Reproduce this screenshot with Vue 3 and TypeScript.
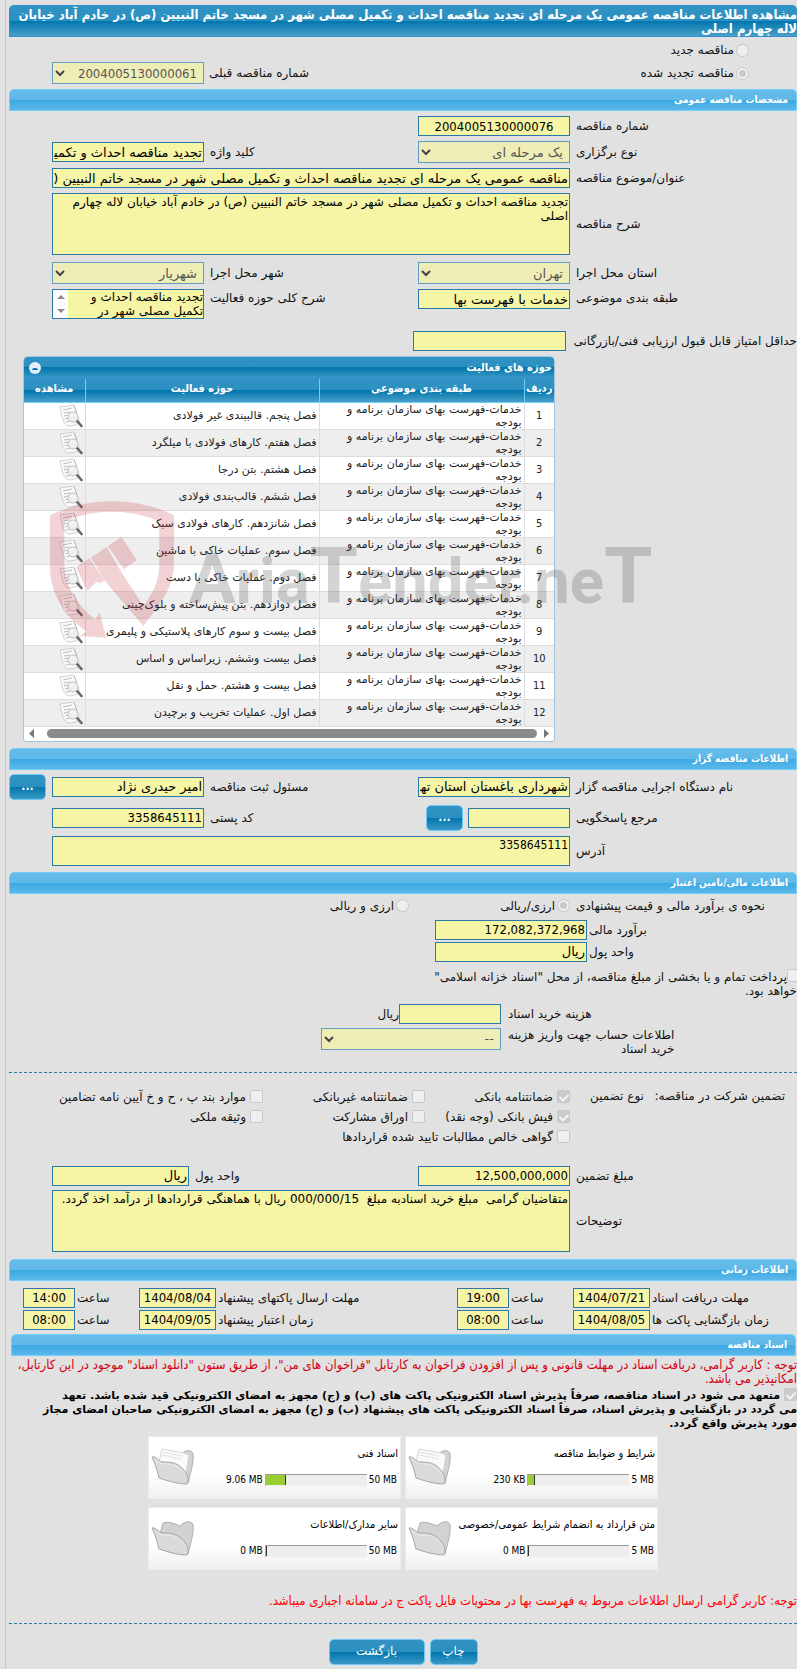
<script setup lang="ts">
interface Activity { id: number; title: string }
interface DocCard { title: string; max: string; used: string; percent: number; filled: boolean }
interface Guarantee { label: string; checked: boolean; wide?: boolean }

const subject = 'خدمات-فهرست بهای سازمان برنامه و بودجه'
const activities: Activity[] = [
  'فصل پنجم. قالببندی غیر فولادی',
  'فصل هفتم. کارهای فولادی با میلگرد',
  'فصل هشتم. بتن درجا',
  'فصل ششم. قالب‌بندی فولادی',
  'فصل شانزدهم. کارهای فولادی سبک',
  'فصل سوم. عملیات خاکی با ماشین',
  'فصل دوم. عملیات خاکی با دست',
  'فصل دوازدهم. بتن پیش‌ساخته و بلوک‌چینی',
  'فصل بیست و سوم کارهای پلاستیکی و پلیمری',
  'فصل بیست وششم. زیراساس و اساس',
  'فصل بیست و هشتم. حمل و نقل',
  'فصل اول. عملیات تخریب و برچیدن',
].map((title, i) => ({ id: i + 1, title }))

const guarantees: Guarantee[] = [
  { label: 'ضمانتنامه بانکی', checked: true },
  { label: 'ضمانتنامه غیربانکی', checked: false },
  { label: 'موارد بند پ ، ح و خ آیین نامه تضامین', checked: false },
  { label: 'فیش بانکی (وجه نقد)', checked: true },
  { label: 'اوراق مشارکت', checked: false },
  { label: 'وثیقه ملکی', checked: false },
  { label: 'گواهی خالص مطالبات تایید شده قراردادها', checked: false, wide: true },
]

const docs: DocCard[] = [
  { title: 'شرایط و ضوابط مناقصه', max: '5 MB', used: '230 KB', percent: 5, filled: true },
  { title: 'اسناد فنی', max: '50 MB', used: '9.06 MB', percent: 19, filled: true },
  { title: 'متن قرارداد به انضمام شرایط عمومی/خصوصی', max: '5 MB', used: '0 MB', percent: 0, filled: false },
  { title: 'سایر مدارک/اطلاعات', max: '50 MB', used: '0 MB', percent: 0, filled: false },
]

const times = [
  [
    { label: 'مهلت دریافت اسناد', date: '1404/07/21', time: '19:00' },
    { label: 'مهلت ارسال پاکتهای پیشنهاد', date: '1404/08/04', time: '14:00' },
  ],
  [
    { label: 'زمان بازگشایی پاکت ها', date: '1404/08/05', time: '08:00' },
    { label: 'زمان اعتبار پیشنهاد', date: '1404/09/05', time: '08:00' },
  ],
]
const description = 'تجدید مناقصه احداث و تکمیل مصلی شهر در مسجد خاتم النبیین (ص) در خادم آباد خیابان لاله چهارم اصلی'
const notes = 'متقاضیان گرامی  مبلغ خرید اسنادبه مبلغ  000/000/15 ریال با هماهنگی قراردادها از درآمد اخذ گردد.'
</script>

<template>
  <main class="page" dir="rtl">
    <h1 class="title-bar">مشاهده اطلاعات مناقصه عمومی یک مرحله ای تجدید مناقصه احداث و تکمیل مصلی شهر در مسجد خاتم النبیین (ص) در خادم آباد خیابان<br>لاله چهارم اصلی</h1>

    <div class="kind-row">
      <label class="option"><input type="radio" name="kind" disabled>مناقصه جدید</label>
    </div>
    <div class="kind-row previous">
      <label class="option kind"><input type="radio" name="kind" checked disabled>مناقصه تجدید شده</label>
      <label class="end" for="prev">شماره مناقصه قبلی</label>
      <span class="select-box"><select id="prev" class="digits" disabled><option>2004005130000061</option></select><svg viewBox="0 0 10 7"><path d="M1 1l4 4 4-4" /></svg></span>
    </div>

    <h2 class="bar">مشخصات مناقصه عمومی</h2>
    <section class="form">
      <div class="row">
        <label for="no">شماره مناقصه</label>
        <input id="no" class="digits center" value="2004005130000076" readonly>
      </div>
      <div class="row">
        <label for="type">نوع برگزاری</label>
        <span class="select-box"><select id="type" disabled><option>یک مرحله ای</option></select><svg viewBox="0 0 10 7"><path d="M1 1l4 4 4-4" /></svg></span>
        <label for="keyword">کلید واژه</label>
        <input id="keyword" value="تجدید مناقصه احداث و تکمیل مصلی شهر" readonly>
      </div>
      <div class="row">
        <label for="subject">عنوان/موضوع مناقصه</label>
        <input id="subject" class="wide" value="مناقصه عمومی یک مرحله ای تجدید مناقصه احداث و تکمیل مصلی شهر در مسجد خاتم النبیین (ص) در خادم آباد خیابان لاله چهارم اصلی" readonly>
      </div>
      <div class="row">
        <label for="desc">شرح مناقصه</label>
        <textarea id="desc" class="wide tall" :value="description" readonly></textarea>
      </div>
      <div class="row spaced">
        <label for="province">استان محل اجرا</label>
        <span class="select-box"><select id="province" disabled><option>تهران</option></select><svg viewBox="0 0 10 7"><path d="M1 1l4 4 4-4" /></svg></span>
        <label for="city">شهر محل اجرا</label>
        <span class="select-box"><select id="city" disabled><option>شهریار</option></select><svg viewBox="0 0 10 7"><path d="M1 1l4 4 4-4" /></svg></span>
      </div>
      <div class="row top">
        <label for="category">طبقه بندی موضوعی</label>
        <input id="category" value="خدمات با فهرست بها" readonly>
        <label for="scope">شرح کلی حوزه فعالیت</label>
        <div class="scroll-box">
          <textarea id="scope" readonly>تجدید مناقصه احداث و تکمیل مصلی شهر در</textarea>
          <span class="spinner"><svg viewBox="0 0 8 4"><path d="M0 4L4 0l4 4z" /></svg><svg viewBox="0 0 8 4"><path d="M0 0l4 4 4-4z" /></svg></span>
        </div>
      </div>
      <div class="score">
        <label for="score">حداقل امتیاز قابل قبول ارزیابی فنی/بازرگانی</label>
        <input id="score" readonly>
      </div>
    </section>

    <div class="activity-area">
      <section class="grid-panel">
        <h3 class="panel-title">حوزه های فعالیت
          <button type="button" class="collapse" aria-label="بستن"><svg viewBox="0 0 12 12"><circle cx="6" cy="6" r="6" /><path d="M3 8c.3-2.600 5.700-2.600 6 0z" /></svg></button>
        </h3>
        <table>
          <colgroup><col class="c-no"><col class="c-subject"><col><col class="c-view"></colgroup>
          <thead><tr><th>ردیف</th><th>طبقه بندی موضوعی</th><th>حوزه فعالیت</th><th>مشاهده</th></tr></thead>
          <tbody>
            <tr v-for="a in activities" :key="a.id">
              <td class="num">{{ a.id }}</td>
              <td class="subject">{{ subject }}</td>
              <td>{{ a.title }}</td>
              <td class="view">
                <button type="button" aria-label="مشاهده">
                  <svg viewBox="0 0 24 24">
                    <path d="M1 3L15 1c1 2 1 4 2 6 1 4 3 8 4 11-3 3-8 4-12 4C3 19 3 10 1 3z" fill="#fafafa" stroke="#c4c4c4" stroke-width=".8" />
                    <path d="M4 6l9-2M5 9l6-1M5 12l4-1M6 15l3-1M7 18l4-1M15 2l3 7" fill="none" stroke="#b4b4b4" stroke-width=".9" />
                    <path d="M18 17l4.500 5" stroke="#666" stroke-width="2.600" stroke-linecap="round" />
                    <circle cx="14" cy="13" r="5" fill="#f0f0f0" stroke="#c0c0c0" />
                    <path d="M11 12c1-2 3-2 4-2" fill="none" stroke="#fff" />
                  </svg>
                </button>
              </td>
            </tr>
          </tbody>
        </table>
        <div class="h-scroll">
          <svg viewBox="0 0 5 9"><path d="M0 0l5 4.500L0 9z" /></svg>
          <span></span>
          <svg viewBox="0 0 5 9"><path d="M5 0L0 4.500 5 9z" /></svg>
        </div>
      </section>
      <svg class="watermark" viewBox="150 450 1800 420" aria-hidden="true">
        <path class="crest" d="M150 493Q235 451 335 450Q440 451 522 493V640C520 720 470 770 430 825L315 690 273 620 320 588 362 660 430 765C465 720 478 680 478 640V510Q335 455 193 510V640C195 710 235 765 285 805L300 785 318 860 240 855 258 840C190 790 152 730 150 650z" />
        <path class="crest" d="M323 585L365 557 410 628 372 655zM228 648L268 622 314 688 300 697 290 692 262 720z" />
        <text x="566" y="755" direction="ltr"><tspan class="initial">A</tspan>ria<tspan class="big">T</tspan>ender.ne<tspan class="big">T</tspan></text>
      </svg>
    </div>

    <h2 class="bar">اطلاعات مناقصه گزار</h2>
    <section class="org">
      <div class="row org-row">
        <label for="org">نام دستگاه اجرایی مناقصه گزار</label>
        <input id="org" value="شهرداری باغستان استان تهران" readonly>
        <label for="officer">مسئول ثبت مناقصه</label>
        <input id="officer" value="امیر حیدری نژاد" readonly>
        <button type="button" class="btn more">...</button>
      </div>
      <div class="row org-row">
        <label for="contact">مرجع پاسخگویی</label>
        <span class="contact"><input id="contact" readonly><button type="button" class="btn more">...</button></span>
        <label for="postal">کد پستی</label>
        <input id="postal" class="digits" value="3358645111" readonly>
      </div>
      <div class="row">
        <label for="address">آدرس</label>
        <textarea id="address" class="digits wide short" readonly>3358645111</textarea>
      </div>
    </section>

    <h2 class="bar">اطلاعات مالی/تامین اعتبار</h2>
    <section class="finance">
      <div class="estimate">
        <span class="end lead">نحوه ی برآورد مالی و قیمت پیشنهادی</span>
        <label class="option first"><input type="radio" name="currency" checked disabled>ارزی/ریالی</label>
        <label class="option"><input type="radio" name="currency" disabled>ارزی و ریالی</label>
      </div>
      <div class="money"><label for="est">برآورد مالی</label><input id="est" class="digits" value="172,082,372,968" readonly></div>
      <div class="money"><label for="unit">واحد پول</label><input id="unit" value="ریال" readonly></div>
      <div class="treasury"><input id="treasury" type="checkbox" disabled><label for="treasury">پرداخت تمام و یا بخشی از مبلغ مناقصه، از محل "اسناد خزانه اسلامی"<br>خواهد بود.</label></div>
      <div class="cost">
        <label for="cost">هزینه خرید اسناد</label>
        <span class="cost-field"><input id="cost" readonly>ریال</span>
      </div>
      <div class="cost account">
        <label for="account">اطلاعات حساب جهت واریز هزینه<br>خرید اسناد</label>
        <span class="select-box"><select id="account" disabled><option>--</option></select><svg viewBox="0 0 10 7"><path d="M1 1l4 4 4-4" /></svg></span>
      </div>
    </section>

    <hr>

    <section class="guarantee">
      <div class="guarantee-head"><span>تضمین شرکت در مناقصه:</span><span>نوع تضمین</span></div>
      <div class="guarantee-list">
        <label v-for="g in guarantees" :key="g.label" class="option" :class="{ across: g.wide }"><input type="checkbox" :checked="g.checked" disabled>{{ g.label }}</label>
      </div>
    </section>
    <section class="amounts">
      <div class="row amount-row">
        <label for="amount">مبلغ تضمین</label>
        <input id="amount" class="digits" value="12,500,000,000" readonly>
        <label for="unit2">واحد پول</label>
        <input id="unit2" value="ریال" readonly>
      </div>
      <div class="row">
        <label for="notes">توضیحات</label>
        <textarea id="notes" class="wide tall" :value="notes" readonly></textarea>
      </div>
    </section>

    <h2 class="bar">اطلاعات زمانی</h2>
    <section class="times">
      <div v-for="(line, i) in times" :key="i" class="time-row">
        <template v-for="(t, j) in line" :key="j">
          <label class="end" :for="`d${i}${j}`">{{ t.label }}</label>
          <input :id="`d${i}${j}`" class="digits center" :value="t.date" readonly>
          <label class="end" :for="`t${i}${j}`">ساعت</label>
          <input :id="`t${i}${j}`" class="digits center" :value="t.time" readonly>
        </template>
      </div>
    </section>

    <h2 class="bar inset">اسناد مناقصه</h2>
    <p class="warning">توجه : کاربر گرامی، دریافت اسناد در مهلت قانونی و پس از افزودن فراخوان به کارتابل "فراخوان های من"، از طریق ستون "دانلود اسناد" موجود در این کارتابل،<br>امکانپذیر می باشد.</p>
    <label class="pledge"><input type="checkbox" checked disabled> متعهد می شود در اسناد مناقصه، صرفاً پذیرش اسناد الکترونیکی پاکت های (ب) و (ج) مجهز به امضای الکترونیکی قید شده باشد. تعهد<br>می گردد در بازگشایی و پذیرش اسناد، صرفاً اسناد الکترونیکی پاکت های پیشنهاد (ب) و (ج) مجهز به امضای الکترونیکی صاحبان امضای مجاز<br>مورد پذیرش واقع گردد.</label>

    <section class="docs">
      <article v-for="d in docs" :key="d.title" class="doc">
        <svg class="folder" viewBox="0 0 44 38">
          <path d="M9 15L12 4c6-2 12 1 17 3 5-5 12-6 13-1 1 9-3 20-5 29z" fill="#d2d2d2" stroke="#adadad" />
          <path v-if="d.filled" d="M8 14L11 1l22 4 5 2-4 23z" fill="#fafafa" stroke="#d4d4d4" />
          <path v-if="d.filled" d="M12 4l19 4M11 7l19 4" stroke="#e2e2e2" />
          <path d="M1 9c4-1 6 4 10 5 9 0 17 0 24 11 2 3 3 8 1 11-9 0-19-3-28-6C6 22 4 15 1 9z" fill="#dadada" stroke="#a6a6a6" />
          <path d="M4 12c4 2 6 4 10 4 8 0 14 2 20 10" fill="none" stroke="#ececec" />
        </svg>
        <div class="doc-body">
          <h4>{{ d.title }}</h4>
          <div class="usage" dir="ltr">
            <span>{{ d.used }}</span>
            <div class="meter"><i :style="{ width: d.percent + '%' }"></i></div>
            <span>{{ d.max }}</span>
          </div>
        </div>
      </article>
    </section>

    <p class="notice">توجه: کاربر گرامی ارسال اطلاعات مربوط به فهرست بها در محتویات فایل پاکت ج در سامانه اجباری میباشد.</p>
    <hr>
    <div class="actions">
      <button type="button" class="btn print">چاپ</button>
      <button type="button" class="btn back">بازگشت</button>
    </div>
  </main>
</template>

<style>
body { margin: 0; background: #e1e1e1; }
</style>

<style scoped>
* { box-sizing: border-box; }
.page { --narrow: Tahoma, "DejaVu Sans Condensed", "DejaVu Sans", sans-serif; margin-left: 5px; padding: 5px 0 5px 3px; border-left: 1px solid #c6c6c6; font: 12px/14px Tahoma, "DejaVu Sans", sans-serif; color: #111; overflow-x: hidden; }
h1, h2, h3, h4, p { margin: 0; font-size: inherit; }
input, select, textarea, button { font-family: inherit; margin: 0; }
.title-bar { height: 32px; padding-top: 2px; white-space: nowrap; color: #fff; font: bold 13px/14px var(--narrow); border: solid #2f8fd4; border-width: 1px 0 1px 1px; border-radius: 5px 5px 0 0; background: linear-gradient(#3093c3 0, #2b8fc0 50%, #0076ae 50%, #4a9fc8 100%); }
.bar { height: 22px; padding: 0 8px; color: #fff; font: bold 10px/20px var(--narrow); border: 1px solid #70d0fa; border-radius: 5px 5px 0 0; background: linear-gradient(#66bcea 0, #60b8e8 50%, #3aa8e2 50%, #5cb8ea 100%); }
.inset { margin: 0 1px 0 2px; }

input:not([type]), textarea { min-width: 0; width: 100%; height: 20px; padding: 1px; border: 1px solid #2a7aa8; border-radius: 0; background: #f6f4a5; color: #000; font-size: 13px; outline: none; }
textarea { display: block; resize: none; overflow: hidden; }
input.digits, textarea.digits, select.digits { font-family: var(--narrow); }
.page textarea { font-size: 12px; line-height: 14px; }
input.center { text-align: center; }
.select-box { position: relative; display: block; }
select { width: 100%; height: 22px; display: block; appearance: none; padding: 0 6px 0 24px; border: 1px solid #5f9cc0; border-radius: 0; background: #efedb6; color: #555; opacity: 1; font-size: 13px; }
.select-box svg { position: absolute; left: 3px; top: 8px; width: 10px; height: 7px; fill: none; stroke: #444; stroke-width: 2; }
input[type="radio"], input[type="checkbox"] { appearance: none; flex: none; width: 13px; height: 13px; border: 1px solid #c8c8c8; border-radius: 2px; background: #efefef; }
input[type="radio"] { border-radius: 50%; }
input[type="radio"]:checked { background: radial-gradient(circle, #cacaca 0 3px, #efefef 4px); }
input[type="checkbox"]:checked { background: #cbcbcb; }
input[type="checkbox"]:checked::after { content: ""; display: block; width: 4px; height: 7px; margin: 1px auto 0; border: solid #f4f4f4; border-width: 0 2px 2px 0; transform: rotate(45deg); }
.option { display: flex; align-items: center; gap: 2px; white-space: nowrap; }
.end { text-align: left; }

.kind-row { padding-right: 48px; margin-top: 6px; }
.previous { display: grid; grid-template-columns: 1fr 1fr 152px; column-gap: 5px; align-items: center; padding-left: 43px; margin: 5px 0; }

.form { display: grid; gap: 5px; padding: 5px 0; }
.row { display: grid; grid-template-columns: 221px 152px 1fr 152px 37px; column-gap: 6px; align-items: center; white-space: nowrap; }
.row > label, .score > label { text-align: left; }
.wide { grid-column: 2 / 5; }
.row .tall { height: 62px; }
.spaced { margin-top: 2px; }
.top { align-items: start; }
.top > label { padding-top: 2px; }
.scroll-box { display: flex; height: 30px; border: 1px solid #2a7aa8; background: #f6f4a5; }
.scroll-box textarea { flex: 1; height: 28px; border: 0; padding: 0; }
.spinner { width: 15px; background: #fcfcfc; display: flex; flex-direction: column; justify-content: space-around; align-items: center; }
.spinner svg { width: 8px; height: 4px; fill: #8b8b8b; }
.score { display: grid; grid-template-columns: 222px 153px; column-gap: 9px; align-items: center; margin-top: 7px; white-space: nowrap; }

.activity-area { position: relative; padding-left: 14px; margin-bottom: 6px; }
.grid-panel { width: 532px; max-width: 100%; margin-right: auto; border: 1px solid #9fc6e0; border-radius: 5px 5px 3px 3px; background: #fff; overflow: hidden; }
.panel-title { display: flex; justify-content: space-between; align-items: center; height: 22px; padding: 0 2px 0 5px; color: #fff; font: bold 11px/14px var(--narrow); border-bottom: 1px solid #2f8fd4; background: linear-gradient(#3093c3 0, #2b8fc0 50%, #0076ae 50%, #3b98c5 100%); }
.collapse { width: 12px; height: 12px; padding: 0; border: 0; background: none; }
.collapse svg { display: block; fill: #e4eef6; }
.collapse path { fill: #0076ae; }
table { width: 100%; border-collapse: collapse; table-layout: fixed; font-size: 11px; line-height: 13px; color: #222; }
.c-no { width: 30px; }
.c-subject { width: 205px; }
.c-view { width: 61px; }
th { height: 23px; padding: 0 0 3px; color: #fff; font-family: var(--narrow); white-space: nowrap; border-bottom: 1px solid #70d0fa; background: linear-gradient(#3093c3 0, #2b8fc0 50%, #0076ae 50%, #4a9fc8 100%); }
th + th { border-right: 1px solid #70d0fa; }
td { height: 27px; padding: 0 2px; border-bottom: 1px solid #ddd; }
td + td { border-right: 1px solid #ddd; }
tbody tr:nth-child(even) { background: #eee; }
.num { text-align: center; font-family: var(--narrow); }
.subject { padding-left: 20px; }
.view { text-align: left; }
.view button { width: 24px; height: 24px; padding: 0; border: 0; background: none; float: right; }
.view svg { display: block; width: 24px; height: 24px; }
.h-scroll { display: flex; align-items: center; justify-content: space-between; gap: 7px; height: 14px; padding: 0 5px; direction: rtl; }
.h-scroll span { flex: 1; height: 9px; margin-left: 6px; border-radius: 5px; background: #8b8b8b; }
.h-scroll svg { width: 5px; height: 9px; fill: #777; }
.watermark { position: absolute; left: 41px; top: 145px; width: 600px; height: 140px; pointer-events: none; overflow: visible; }
.crest { fill: rgba(196, 50, 60, .22); }
.watermark text { fill: rgba(70, 70, 70, .23); font: bold 190px Roboto, sans-serif; }
.initial { font-size: 210px; }
.big { font-size: 235px; }

.btn { height: 26px; padding: 0 0 2px; color: #fff; font-size: 12px; border: 1px solid #6cc8f2; border-radius: 5px; background: linear-gradient(#3093c3 0, #2b8fc0 50%, #0076ae 50%, #3b98c5 100%); }
.more { width: 37px; font-family: var(--narrow); font-weight: bold; }
.org { display: grid; gap: 5px; padding: 4px 0 6px; }
.org-row { min-height: 26px; }
.contact { display: flex; gap: 5px; align-items: center; }
.contact input { flex: 1; }
.contact .more { margin-left: 8px; }
.row .short { height: 30px; }

.finance { padding: 5px 0 16px; }
.estimate { display: flex; align-items: center; gap: 6px; height: 14px; margin-bottom: 7px; white-space: nowrap; }
.lead { width: 221px; }
.estimate .first { width: 155px; }
.money { display: grid; grid-template-columns: 208px 152px; column-gap: 2px; align-items: center; text-align: left; margin-bottom: 2px; }
.treasury { margin: 7px 0 6px; white-space: nowrap; }
.treasury input { margin-right: -3px; vertical-align: -1px; }
.cost { display: grid; grid-template-columns: 289px 180px; column-gap: 7px; align-items: center; text-align: left; }
.cost label { justify-self: end; text-align: right; }
.cost-field { display: flex; align-items: center; }
.cost-field input:not([type]) { flex: none; width: 102px; }
.account { margin-top: 4px; white-space: nowrap; }
.account .select-box { align-self: start; }
hr { height: 0; margin: 0; border: 0; border-top: 1px dashed #2a7aa8; }

.guarantee { display: flex; padding: 14px 0 19px; }
.guarantee-head { display: flex; justify-content: space-between; align-items: center; width: 227px; height: 18px; padding: 0 12px 0 20px; white-space: nowrap; }
.guarantee-list { flex: 1; display: grid; grid-template-columns: 145px 162px 1fr; grid-auto-rows: 20px; }
.guarantee-list .option { gap: 4px; }
.across { grid-column: 1 / -1; }
.amounts { display: grid; gap: 4px; padding-bottom: 7px; }
.amount-row { grid-template-columns: 221px 152px 1fr 137px 37px; }
.times { display: grid; gap: 2px; padding: 7px 0 4px; }
.time-row { display: grid; grid-template-columns: 145px 77px 60px 52px 1fr 77px 60px 52px 12px; column-gap: 2px; align-items: center; white-space: nowrap; }
.warning { margin-top: 2px; color: #d4000f; white-space: nowrap; font: 13px/14px var(--narrow); }
.pledge { display: block; margin-top: 2px; font-size: 11px; font-weight: bold; color: #000; white-space: nowrap; }
.pledge input { vertical-align: -2px; }

.docs { display: grid; grid-template-columns: 253px 253px; justify-content: center; gap: 8px 4px; padding: 5px 0 0; }
.doc { display: flex; flex-direction: row-reverse; align-items: center; height: 63px; padding: 0 2px; border: 1px solid #ececec; background: linear-gradient(#fff 60%, #f0f0f0); }
.folder { flex: none; width: 44px; height: 38px; }
.doc-body { flex: 1; font: 10px/14px var(--narrow); color: #000; white-space: nowrap; }
.doc-body h4 { font-size: 11px; font-weight: normal; margin-bottom: 12px; }
.usage { display: flex; justify-content: flex-end; align-items: center; gap: 2px; padding-right: 1px; }
.meter { width: 102px; height: 12px; border-top: 1px solid #999; border-left: 1px solid #aaa; background: #eee; }
.meter i { display: block; height: 10px; box-sizing: content-box; background: #9acd32; border-right: 1px solid #333; }
.notice { margin: 24px 0 15px; color: #f00; white-space: nowrap; font: 13px/14px var(--narrow); }
.actions { display: flex; justify-content: center; gap: 5px; padding-top: 15px; }
.print { width: 48px; }
.back { width: 96px; }
</style>
